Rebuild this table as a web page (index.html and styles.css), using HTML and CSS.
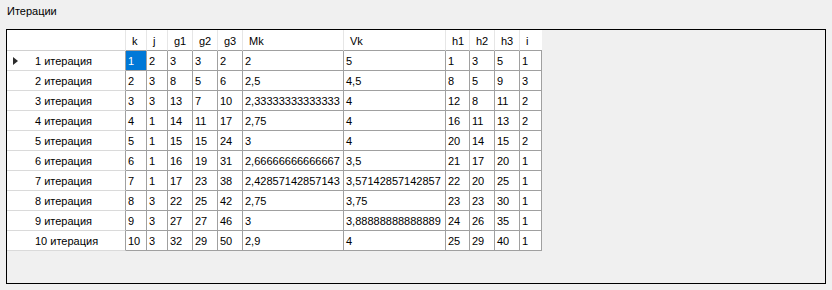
FILE: index.html
```html
<!DOCTYPE html>
<html lang="ru">
<head>
<meta charset="utf-8">
<title>Итерации</title>
<link rel="stylesheet" href="styles.css">
</head>
<body>
<div class="label">Итерации</div>
<div class="grid">
  <div class="row head">
    <div class="rh"></div>
    <div class="c w21">k</div><div class="c w21">j</div><div class="c w25">g1</div><div class="c w25">g2</div><div class="c w25">g3</div><div class="c w101">Mk</div><div class="c w102">Vk</div><div class="c w24">h1</div><div class="c w25">h2</div><div class="c w25">h3</div><div class="c w22">i</div>
  </div>
  <div class="row">
    <div class="rh"><span class="arrow"></span>1 итерация</div>
    <div class="c w21 sel">1</div><div class="c w21">2</div><div class="c w25">3</div><div class="c w25">3</div><div class="c w25">2</div><div class="c w101">2</div><div class="c w102">5</div><div class="c w24">1</div><div class="c w25">3</div><div class="c w25">5</div><div class="c w22">1</div>
  </div>
  <div class="row">
    <div class="rh">2 итерация</div>
    <div class="c w21">2</div><div class="c w21">3</div><div class="c w25">8</div><div class="c w25">5</div><div class="c w25">6</div><div class="c w101">2,5</div><div class="c w102">4,5</div><div class="c w24">8</div><div class="c w25">5</div><div class="c w25">9</div><div class="c w22">3</div>
  </div>
  <div class="row">
    <div class="rh">3 итерация</div>
    <div class="c w21">3</div><div class="c w21">3</div><div class="c w25">13</div><div class="c w25">7</div><div class="c w25">10</div><div class="c w101">2,33333333333333</div><div class="c w102">4</div><div class="c w24">12</div><div class="c w25">8</div><div class="c w25">11</div><div class="c w22">2</div>
  </div>
  <div class="row">
    <div class="rh">4 итерация</div>
    <div class="c w21">4</div><div class="c w21">1</div><div class="c w25">14</div><div class="c w25">11</div><div class="c w25">17</div><div class="c w101">2,75</div><div class="c w102">4</div><div class="c w24">16</div><div class="c w25">11</div><div class="c w25">13</div><div class="c w22">2</div>
  </div>
  <div class="row">
    <div class="rh">5 итерация</div>
    <div class="c w21">5</div><div class="c w21">1</div><div class="c w25">15</div><div class="c w25">15</div><div class="c w25">24</div><div class="c w101">3</div><div class="c w102">4</div><div class="c w24">20</div><div class="c w25">14</div><div class="c w25">15</div><div class="c w22">2</div>
  </div>
  <div class="row">
    <div class="rh">6 итерация</div>
    <div class="c w21">6</div><div class="c w21">1</div><div class="c w25">16</div><div class="c w25">19</div><div class="c w25">31</div><div class="c w101">2,66666666666667</div><div class="c w102">3,5</div><div class="c w24">21</div><div class="c w25">17</div><div class="c w25">20</div><div class="c w22">1</div>
  </div>
  <div class="row">
    <div class="rh">7 итерация</div>
    <div class="c w21">7</div><div class="c w21">1</div><div class="c w25">17</div><div class="c w25">23</div><div class="c w25">38</div><div class="c w101">2,42857142857143</div><div class="c w102">3,57142857142857</div><div class="c w24">22</div><div class="c w25">20</div><div class="c w25">25</div><div class="c w22">1</div>
  </div>
  <div class="row">
    <div class="rh">8 итерация</div>
    <div class="c w21">8</div><div class="c w21">3</div><div class="c w25">22</div><div class="c w25">25</div><div class="c w25">42</div><div class="c w101">2,75</div><div class="c w102">3,75</div><div class="c w24">23</div><div class="c w25">23</div><div class="c w25">30</div><div class="c w22">1</div>
  </div>
  <div class="row">
    <div class="rh">9 итерация</div>
    <div class="c w21">9</div><div class="c w21">3</div><div class="c w25">27</div><div class="c w25">27</div><div class="c w25">46</div><div class="c w101">3</div><div class="c w102">3,88888888888889</div><div class="c w24">24</div><div class="c w25">26</div><div class="c w25">35</div><div class="c w22">1</div>
  </div>
  <div class="row">
    <div class="rh">10 итерация</div>
    <div class="c w21">10</div><div class="c w21">3</div><div class="c w25">32</div><div class="c w25">29</div><div class="c w25">50</div><div class="c w101">2,9</div><div class="c w102">4</div><div class="c w24">25</div><div class="c w25">29</div><div class="c w25">40</div><div class="c w22">1</div>
  </div>
</div>
</body>
</html>
```

FILE: styles.css
```css
html, body {
  margin: 0;
  padding: 0;
  background: #f0f0f0;
}
body {
  font-family: "Liberation Sans", Arial, sans-serif;
  font-size: 11px;
  color: #000;
  width: 832px;
  height: 290px;
  overflow: hidden;
}
.label {
  padding: 5px 0 0 7px;
  height: 13px;
  line-height: 13px;
}
.grid {
  box-sizing: border-box;
  margin: 11px 0 0 6px;
  width: 820px;
  height: 255px;
  border: 1px solid #000;
  background: #f0f0f0;
  display: flex;
  flex-direction: column;
}
.row {
  display: flex;
  height: 20px;
}
.row.head {
  height: 21px;
}
.rh {
  box-sizing: border-box;
  width: 119px;
  flex: none;
  background: #fff;
  border-right: 1px solid #a0a0a0;
  border-bottom: 1px solid #dadada;
  padding-left: 28px;
  padding-top: 2px;
  line-height: 17px;
  position: relative;
  white-space: nowrap;
  overflow: hidden;
}
.head .rh {
  border-right: 1px solid #e6e6e6;
  border-bottom: 1px solid #d0d0d0;
}
.arrow {
  position: absolute;
  left: 6px;
  top: 6px;
  width: 0;
  height: 0;
  border-top: 4px solid transparent;
  border-bottom: 4px solid transparent;
  border-left: 5px solid #2b2b2b;
}
.c {
  box-sizing: border-box;
  flex: none;
  background: #fff;
  border-right: 1px solid #a0a0a0;
  border-bottom: 1px solid #a0a0a0;
  padding-left: 2px;
  padding-top: 2px;
  line-height: 17px;
  white-space: nowrap;
  overflow: hidden;
}
.head .c {
  border-right: 1px solid #e6e6e6;
  border-bottom: 1px solid #a0a0a0;
  padding-left: 6px;
  padding-top: 2px;
  line-height: 18px;
}
.head .c:last-child {
  border-right: none;
}
.c.sel {
  background: #0078d7;
  color: #fff;
}
.w21 { width: 21px; }
.w22 { width: 22px; }
.w24 { width: 24px; }
.w25 { width: 25px; }
.w101 { width: 101px; }
.w102 { width: 102px; }
```
